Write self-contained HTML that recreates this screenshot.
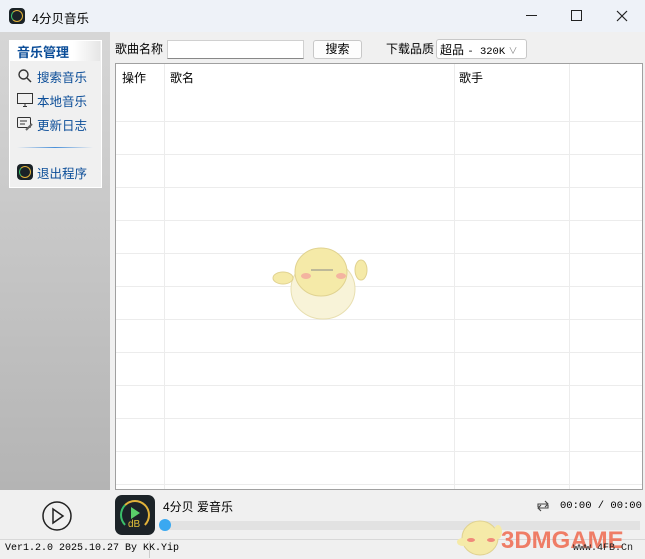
<!DOCTYPE html>
<html><head><meta charset="utf-8"><style>
*{margin:0;padding:0;box-sizing:border-box}
body{width:645px;height:559px;overflow:hidden;background:#f0f0f0;font-family:"Liberation Sans","Noto Sans CJK SC",sans-serif;font-size:12px;color:#000;position:relative}
.abs{position:absolute;white-space:nowrap}
.title{left:0;top:0;width:645px;height:32px;background:#eef2f8}
.side{left:0;top:32px;width:110px;height:458px;background:linear-gradient(#d6d6d6,#b4b4b4)}
.panel{left:9px;top:40px;width:93px;height:148px;background:#f0f0f0;border:1px solid #fff}
.nav{color:#0b4d98;font-size:12.5px}
.tbl{left:115px;top:63px;width:528px;height:427px;background:#fff;border:1px solid #a0a0a0}
.hl{position:absolute;left:0;width:526px;height:1px;background:#ececec}
.vl{position:absolute;top:0;width:1px;height:425px;background:#ececec}
.mono{font-family:"Liberation Mono","Noto Sans CJK SC",monospace}
</style></head><body>
<div class="abs title"></div>
<div class="abs" style="left:9px;top:8px;width:16px;height:16px;border-radius:4px;background:#1a2227"><div style="position:absolute;left:2px;top:2px;width:12px;height:12px;border-radius:50%;border:1.5px solid #e2b23a;border-left-color:#3ac06a"></div></div>
<div class="abs" style="left:32px;top:8px;font-size:12.5px">4分贝音乐</div>
<div class="abs" style="left:526px;top:15px;width:11px;height:1px;background:#222"></div>
<div class="abs" style="left:571px;top:10px;width:11px;height:11px;border:1px solid #222"></div>
<svg class="abs" style="left:616px;top:10px" width="12" height="12"><path d="M1 1L11 11M11 1L1 11" stroke="#222" stroke-width="1.2"/></svg>
<div class="abs side"></div>
<div class="abs panel"></div>
<div class="abs" style="left:10px;top:41px;width:90px;height:20px;background:linear-gradient(90deg,#fff,#fff 70%,#e6e6e6)"></div>
<div class="abs" style="left:17px;top:42px;font-weight:bold;color:#0b4d98;font-size:13px">音乐管理</div>
<svg class="abs" style="left:17px;top:68px" width="16" height="16"><circle cx="6.5" cy="6.5" r="4.5" fill="none" stroke="#333" stroke-width="1.4"/><line x1="10" y1="10" x2="14" y2="14" stroke="#333" stroke-width="1.5"/></svg>
<div class="abs nav" style="left:37px;top:67px">搜索音乐</div>
<svg class="abs" style="left:17px;top:92px" width="16" height="16"><rect x="0.5" y="1.5" width="15" height="10" fill="none" stroke="#333"/><line x1="6" y1="14.5" x2="10" y2="14.5" stroke="#333"/><line x1="8" y1="12" x2="8" y2="14" stroke="#333"/></svg>
<div class="abs nav" style="left:37px;top:91px">本地音乐</div>
<svg class="abs" style="left:17px;top:116px" width="16" height="16"><rect x="0.5" y="1.5" width="13" height="10" rx="1" fill="none" stroke="#333"/><line x1="3" y1="5" x2="10" y2="5" stroke="#333"/><line x1="3" y1="8" x2="8" y2="8" stroke="#333"/><line x1="9" y1="14" x2="15" y2="8" stroke="#666" stroke-width="2"/></svg>
<div class="abs nav" style="left:37px;top:115px">更新日志</div>
<div class="abs" style="left:17px;top:147px;width:76px;height:1px;background:linear-gradient(90deg,transparent,#4a90d9,transparent)"></div>
<div class="abs" style="left:17px;top:164px;width:16px;height:16px;border-radius:4px;background:#1a2227"><div style="position:absolute;left:2px;top:2px;width:12px;height:12px;border-radius:50%;border:1.5px solid #e2b23a;border-left-color:#3ac06a"></div></div>
<div class="abs nav" style="left:37px;top:163px">退出程序</div>
<div class="abs" style="left:115px;top:40px">歌曲名称</div>
<div class="abs" style="left:167px;top:40px;width:137px;height:19px;background:#fff;border:1px solid #d0d0d0;border-bottom-color:#888"></div>
<div class="abs" style="left:313px;top:40px;width:49px;height:19px;background:#fdfdfd;border:1px solid #c8c8c8;border-radius:3px;text-align:center;line-height:17px">搜索</div>
<div class="abs" style="left:386px;top:40px">下载品质</div>
<div class="abs" style="left:436px;top:39px;width:91px;height:20px;background:#fff;border:1px solid #c8c8c8;border-radius:3px;padding:1px 0 0 3px">超品 <span class="mono" style="font-size:10.5px">- 320K</span> <span style="color:#888;font-size:9px">∨</span></div>
<div class="abs tbl">
<div class="vl" style="left:48px"></div><div class="vl" style="left:338px"></div><div class="vl" style="left:453px"></div>
<div class="hl" style="top:57px"></div><div class="hl" style="top:90px"></div><div class="hl" style="top:123px"></div><div class="hl" style="top:156px"></div><div class="hl" style="top:189px"></div><div class="hl" style="top:222px"></div><div class="hl" style="top:255px"></div><div class="hl" style="top:288px"></div><div class="hl" style="top:321px"></div><div class="hl" style="top:354px"></div><div class="hl" style="top:387px"></div><div class="hl" style="top:420px"></div>
<div style="position:absolute;left:6px;top:5px">操作</div>
<div style="position:absolute;left:54px;top:5px">歌名</div>
<div style="position:absolute;left:343px;top:5px">歌手</div>
<svg style="position:absolute;left:155px;top:170px" width="100" height="90"><ellipse cx="52" cy="55" rx="32" ry="30" fill="#f8f3d8" stroke="#e8dfb0"/><ellipse cx="50" cy="38" rx="26" ry="24" fill="#f5eaa8" stroke="#e0d290"/><ellipse cx="35" cy="42" rx="5" ry="3" fill="#f4b4a0"/><ellipse cx="70" cy="42" rx="5" ry="3" fill="#f4b4a0"/><line x1="40" y1="36" x2="62" y2="36" stroke="#888"/><ellipse cx="12" cy="44" rx="10" ry="6" fill="#f5eaa8" stroke="#e0d290"/><ellipse cx="90" cy="36" rx="6" ry="10" fill="#f5eaa8" stroke="#e0d290"/></svg>
</div>
<svg class="abs" style="left:41px;top:500px" width="32" height="32"><circle cx="16" cy="16" r="14" fill="none" stroke="#222" stroke-width="1.5"/><path d="M12 9 L22 16 L12 23 Z" fill="none" stroke="#222" stroke-width="1.5"/></svg>
<div class="abs" style="left:115px;top:495px;width:40px;height:40px;border-radius:7px;background:#1c2328"><div style="position:absolute;left:5px;top:5px;width:30px;height:30px;border-radius:50%;border:2px solid #e2b23a;border-left-color:#3ac06a;border-bottom-color:transparent"></div><div style="position:absolute;left:16px;top:12px;width:0;height:0;border-left:9px solid #5ad06a;border-top:6px solid transparent;border-bottom:6px solid transparent"></div><div style="position:absolute;left:13px;top:24px;color:#e2c03a;font-size:10px">dB</div></div>
<div class="abs" style="left:163px;top:498px">4分贝 爱音乐</div>
<div class="abs" style="left:160px;top:521px;width:480px;height:9px;background:#e2e2e2"></div>
<div class="abs" style="left:159px;top:519px;width:12px;height:12px;border-radius:50%;background:#3aa8f0"></div>
<svg class="abs" style="left:535px;top:499px" width="16" height="14"><path d="M3 8V5h9M10 2l3 3-3 3M13 6v3H4M6 12l-3-3 3-3" fill="none" stroke="#444" stroke-width="1.1"/></svg>
<div class="abs mono" style="left:560px;top:500px;font-size:10.5px">00:00 / 00:00</div>
<div class="abs" style="left:0;top:539px;width:645px;height:1px;background:#d8d8d8"></div>
<div class="abs mono" style="left:5px;top:543px;font-size:10px">Ver1.2.0 2025.10.27 By KK.Yip</div>
<div class="abs" style="left:149px;top:541px;width:1px;height:17px;background:#ccc"></div>
<svg class="abs" style="left:455px;top:510px" width="50" height="48"><ellipse cx="25" cy="28" rx="18" ry="17" fill="#f5eaa8" stroke="#e0d290"/><ellipse cx="8" cy="32" rx="6" ry="4" fill="#f5eaa8"/><ellipse cx="43" cy="22" rx="4" ry="7" fill="#f5eaa8"/><ellipse cx="16" cy="30" rx="4" ry="2" fill="#f08a7a"/><ellipse cx="36" cy="30" rx="4" ry="2" fill="#f08a7a"/></svg>
<div class="abs" style="left:501px;top:527px;font-size:24px;font-weight:bold;color:#ef6a4f;opacity:.85">3DMGAME</div>
<div class="abs mono" style="left:573px;top:543px;font-size:10px;color:#222">www.4FB.Cn</div>
</body></html>
